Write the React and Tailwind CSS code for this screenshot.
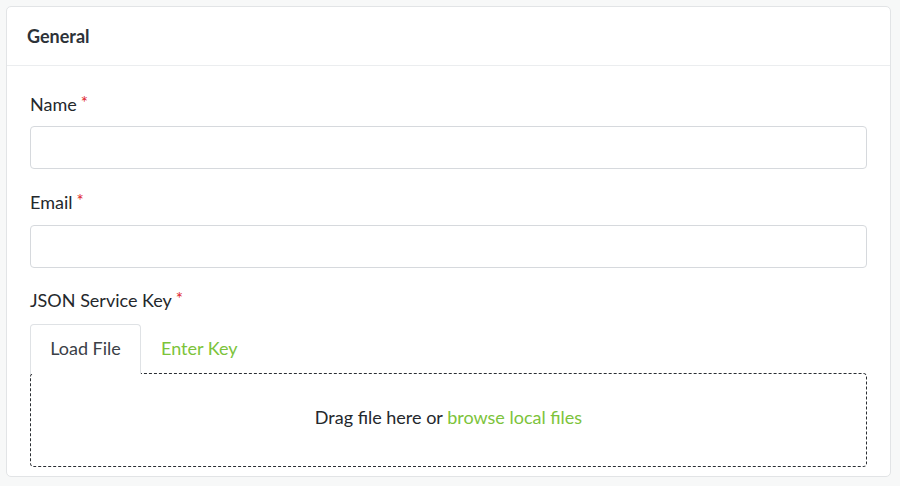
export default function App() {
  return (
    <div className="w-[900px] h-[486px] bg-[#f7f8f8] p-[6px] font-['Lato','Noto_Sans',sans-serif] text-[#24282c]">
      <div className="bg-white border border-[#e2e4e6] rounded-[5px] w-[885px] h-[471px] flex flex-col">
        <div className="h-[59px] flex items-center px-[20px] border-b border-[#ebedef]">
          <span className="text-[18px] font-bold text-[#2d3238]">General</span>
        </div>
        <div className="px-[23px] pt-[26px] flex flex-col">
          <label className="text-[18px] leading-[24px] h-[24px]">
            Name<span className="text-[#e0262b] ml-[4px] text-[17px] relative -top-[2px]">*</span>
          </label>
          <div className="mt-[10px] h-[43px] border border-[#d6d9dd] rounded-[4px]"></div>
          <label className="mt-[21px] text-[18px] leading-[24px] h-[24px]">
            Email<span className="text-[#e0262b] ml-[4px] text-[17px] relative -top-[2px]">*</span>
          </label>
          <div className="mt-[11px] h-[43px] border border-[#d6d9dd] rounded-[4px]"></div>
          <label className="mt-[20px] text-[18px] leading-[24px] h-[24px]">
            JSON Service Key<span className="text-[#e0262b] ml-[4px] text-[17px] relative -top-[2px]">*</span>
          </label>
          <div className="mt-[12px] flex items-end">
            <div className="h-[50px] w-[111px] border border-b-0 border-[#dfe2e5] rounded-t-[4px] flex items-center justify-center pb-[2px] text-[18px] text-[#3b4047] bg-white relative z-10 -mb-[1px]">
              Load File
            </div>
            <div className="h-[49px] px-[20px] flex items-center text-[18px] text-[#7cc33a]">
              Enter Key
            </div>
          </div>
          <div className="h-[94px] border border-dashed border-[#2a2e33] rounded-[4px] flex items-center justify-center pb-[6px] text-[18px]">
            <span>
              Drag file here or <span className="text-[#7cc33a]">browse local files</span>
            </span>
          </div>
        </div>
      </div>
    </div>
  );
}
